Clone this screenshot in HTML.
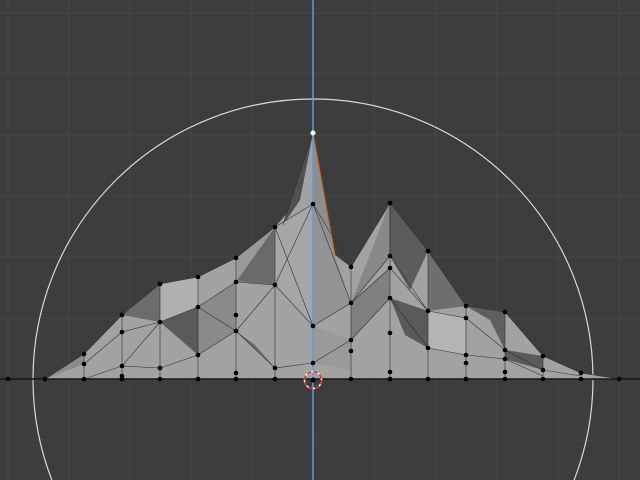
<!DOCTYPE html><html><head><style>html,body{margin:0;padding:0;background:#3d3d3d;overflow:hidden;width:640px;height:480px}svg{display:block;overflow:hidden}</style></head><body>
<svg width="640" height="480" viewBox="0 0 640 480" xmlns="http://www.w3.org/2000/svg">
<rect width="640" height="480" fill="#3d3d3d"/>
<g stroke="#474747" stroke-width="1">
<path d="M8 0V480M69 0V480M130 0V480M191 0V480M252 0V480M374 0V480M436 0V480M497 0V480M558 0V480M619 0V480M0 13H640M0 74H640M0 135H640M0 196H640M0 257H640M0 318H640M0 440H640"/>
</g>
<circle cx="313" cy="379" r="280" fill="none" stroke="#d8d8d8" stroke-width="1.2"/>
<polygon fill="#a2a2a2" points="45,379 84,354 122,315 160,284 198,277 236,258 275,227 290,210 313,133 335,255 351,267 390,203 428,251 466,306 505,312 543,356 581,373 619,379"/>
<g stroke="none">
<polygon fill="#505050" points="283,225 313,133 300,200"/>
<polygon fill="#8e8e8e" points="313,204 313,133 335,255"/>
<polygon fill="#939393" points="313,204 335,255 351,303 313,326"/>
<polygon fill="#a6a6a6" points="275,227 313,204 313,326 275,285"/>
<polygon fill="#6a6a6a" points="236,281 275,227 275,285"/>
<polygon fill="#5c5c5c" points="390,203 428,251 410,290 390,256"/>
<polygon fill="#888" points="390,203 351,303 390,256"/>
<polygon fill="#808080" points="351,303 390,268 390,298 351,340"/>
<polygon fill="#5a5a5a" points="390,298 428,311 428,348 405,335"/>
<polygon fill="#6e6e6e" points="428,251 466,306 428,311"/>
<polygon fill="#5f5f5f" points="466,306 505,312 505,350 490,320"/>
<polygon fill="#6a6a6a" points="236,331 275,368 255,345"/>
<polygon fill="#5a5a5a" points="160,322 198,307 198,355"/>
<polygon fill="#6c6c6c" points="122,315 160,284 160,322"/>
<polygon fill="#b0b0b0" points="160,284 198,277 198,307 160,322"/>
<polygon fill="#8a8a8a" points="198,307 236,282 236,331 198,355"/>
<polygon fill="#9a9a9a" points="313,326 351,340 351,370 313,363"/>
<polygon fill="#5a5a5a" points="505,350 543,356 543,370 505,359"/>
<polygon fill="#8c8c8c" points="45,379 84,354 84,364"/>
<polygon fill="#b4b4b4" points="428,311 466,318 466,355 428,348"/>
<polygon fill="#999" points="236,258 275,227 236,282"/>
</g>
<g stroke="#333" stroke-width="0.6" fill="none">
<polyline points="45,379 84,354 122,315 160,284 198,277 236,258 275,227 313,204 351,267 390,203 428,251 466,306 505,312 543,356 581,373 619,379"/>
<path d="M84,354V379M122,315V379M160,284V379M198,277V379M236,258V379M275,227V379M351,267V379M390,203V379M428,251V379M466,306V379M505,312V379M543,356V379"/>
<polyline points="84,364 122,332 160,322 198,307 236,282 275,285 313,326 351,303 390,268 428,311 466,318 505,350 543,370 581,376"/>
<polyline points="84,379 122,366 160,368 198,355 236,331 275,368 313,363 351,340 390,298 428,348 466,355 505,359 543,376"/>
<path d="M236,331L198,307M275,285L313,204M313,326L275,227M351,303L313,204M390,256L351,303M160,322L122,366M236,331L275,285M390,203L390,256L428,311M313,133L283,225M390,298L428,348"/>
</g>
<line x1="313" y1="133" x2="335" y2="255" stroke="#c0642a" stroke-width="1"/>
<line x1="0" y1="379" x2="640" y2="379" stroke="#151515" stroke-width="1.5"/>
<line x1="0" y1="380" x2="640" y2="380" stroke="#6b2e2e" stroke-width="0.6"/>
<line x1="313" y1="0" x2="313" y2="480" stroke="#5d9bdc" stroke-width="1.5"/>
<g fill="#000">
<circle cx="8" cy="379" r="2.3"/><circle cx="45" cy="379" r="2.3"/><circle cx="84" cy="379" r="2.3"/><circle cx="122" cy="379" r="2.3"/><circle cx="160" cy="379" r="2.3"/><circle cx="198" cy="379" r="2.3"/><circle cx="236" cy="379" r="2.3"/><circle cx="275" cy="379" r="2.3"/><circle cx="351" cy="379" r="2.3"/><circle cx="390" cy="379" r="2.3"/><circle cx="428" cy="379" r="2.3"/><circle cx="466" cy="379" r="2.3"/><circle cx="505" cy="379" r="2.3"/><circle cx="543" cy="379" r="2.3"/><circle cx="581" cy="379" r="2.3"/><circle cx="619" cy="379" r="2.3"/>
<circle cx="84" cy="354" r="2.3"/><circle cx="84" cy="364" r="2.3"/>
<circle cx="122" cy="315" r="2.3"/><circle cx="122" cy="332" r="2.3"/><circle cx="122" cy="366" r="2.3"/><circle cx="122" cy="376" r="2.3"/>
<circle cx="160" cy="284" r="2.3"/><circle cx="160" cy="322" r="2.3"/><circle cx="160" cy="368" r="2.3"/>
<circle cx="198" cy="277" r="2.3"/><circle cx="198" cy="307" r="2.3"/><circle cx="198" cy="355" r="2.3"/>
<circle cx="236" cy="258" r="2.3"/><circle cx="236" cy="282" r="2.3"/><circle cx="236" cy="315" r="2.3"/><circle cx="236" cy="331" r="2.3"/><circle cx="236" cy="373" r="2.3"/>
<circle cx="275" cy="227" r="2.3"/><circle cx="275" cy="285" r="2.3"/><circle cx="275" cy="368" r="2.3"/>
<circle cx="313" cy="204" r="2.3"/><circle cx="313" cy="326" r="2.3"/><circle cx="313" cy="363" r="2.3"/>
<circle cx="351" cy="267" r="2.3"/><circle cx="351" cy="303" r="2.3"/><circle cx="351" cy="340" r="2.3"/><circle cx="351" cy="351" r="2.3"/>
<circle cx="390" cy="203" r="2.3"/><circle cx="390" cy="256" r="2.3"/><circle cx="390" cy="268" r="2.3"/><circle cx="390" cy="298" r="2.3"/><circle cx="390" cy="333" r="2.3"/><circle cx="390" cy="372" r="2.3"/>
<circle cx="428" cy="251" r="2.3"/><circle cx="428" cy="311" r="2.3"/><circle cx="428" cy="348" r="2.3"/>
<circle cx="466" cy="306" r="2.3"/><circle cx="466" cy="318" r="2.3"/><circle cx="466" cy="355" r="2.3"/><circle cx="466" cy="363" r="2.3"/>
<circle cx="505" cy="312" r="2.3"/><circle cx="505" cy="350" r="2.3"/><circle cx="505" cy="359" r="2.3"/><circle cx="505" cy="372" r="2.3"/>
<circle cx="543" cy="356" r="2.3"/><circle cx="543" cy="370" r="2.3"/><circle cx="581" cy="373" r="2.3"/>
</g>
<circle cx="313" cy="133" r="2.5" fill="#fff"/>
<circle cx="313" cy="380" r="8.5" fill="none" stroke="#fff" stroke-width="1.5"/>
<circle cx="313" cy="380" r="8.5" fill="none" stroke="#d0302a" stroke-width="1.5" stroke-dasharray="4.5 2.2"/>
<circle cx="313" cy="380" r="2.5" fill="#000"/>
</svg>
</body></html>
